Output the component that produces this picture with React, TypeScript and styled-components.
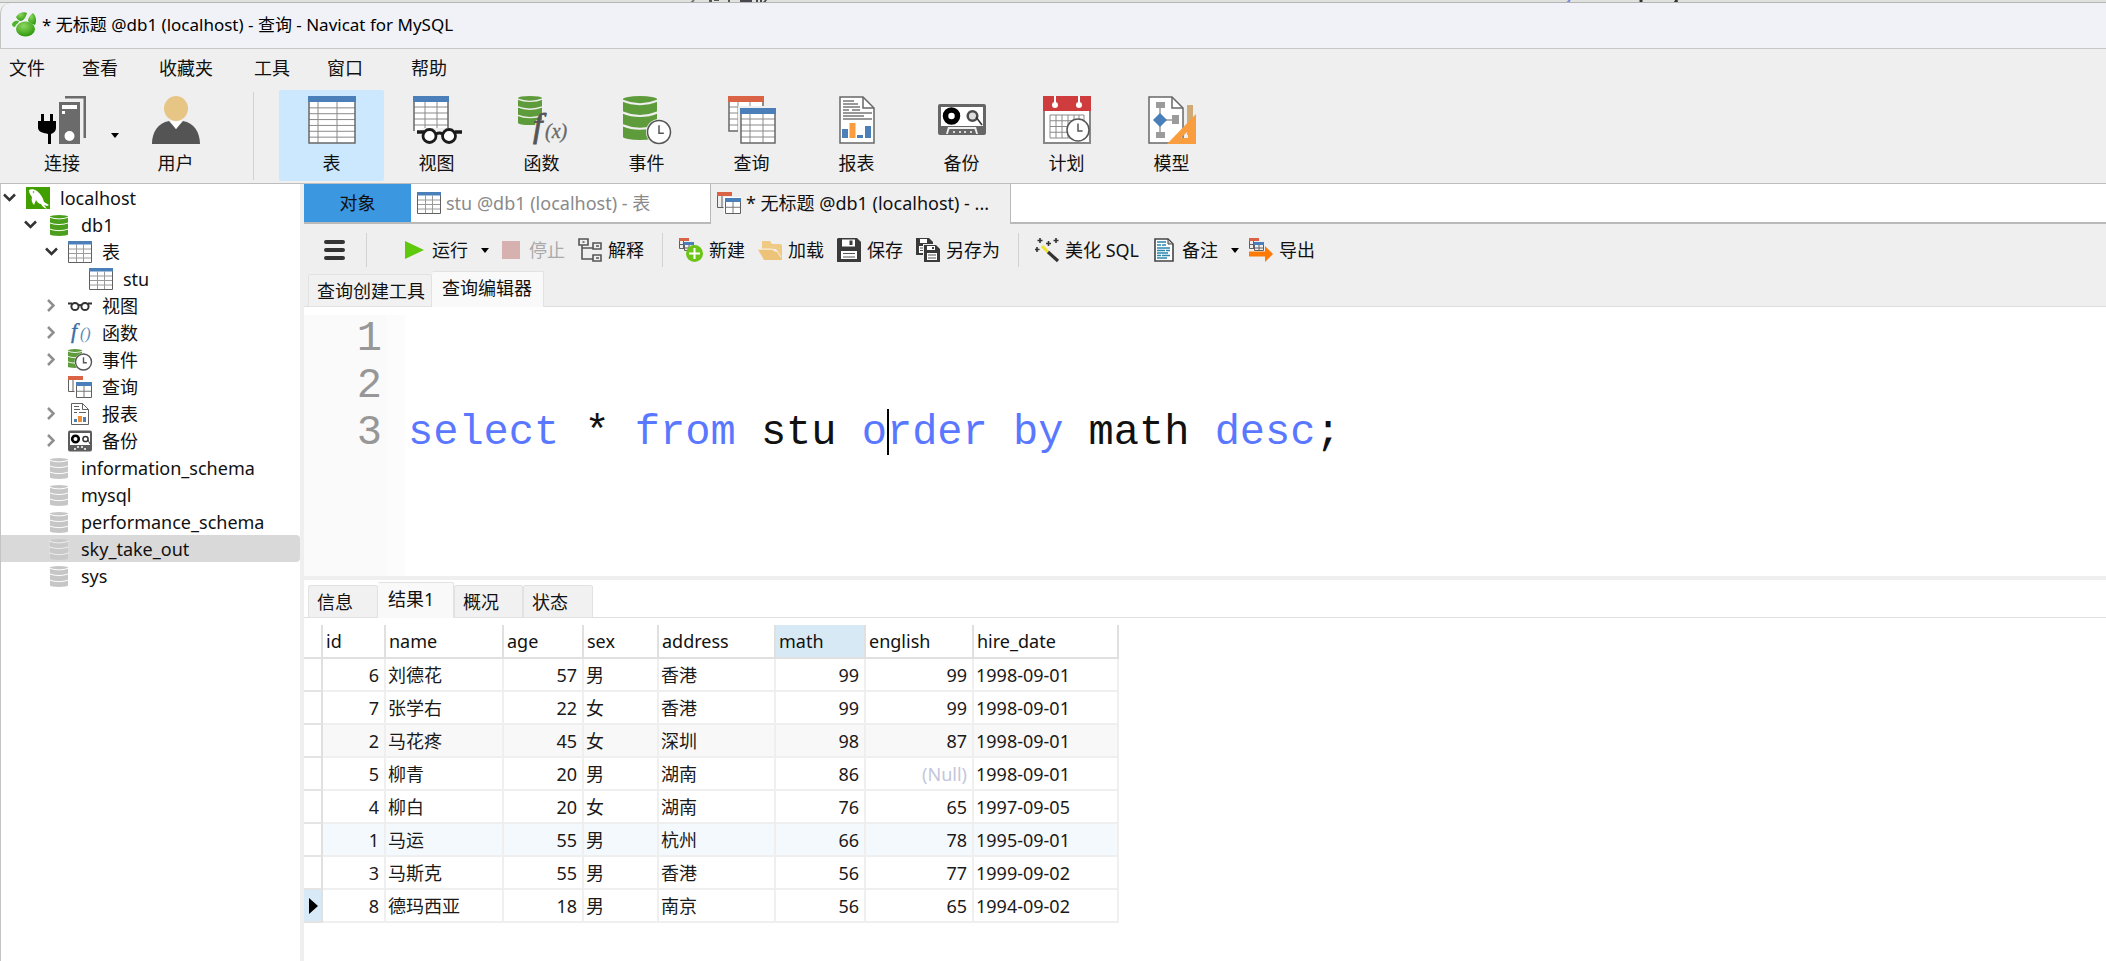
import React from "react";
import styled, { createGlobalStyle, css } from "styled-components";

const Global = createGlobalStyle`
  *, *::before, *::after { box-sizing: border-box; }
  html, body, #root { margin: 0; height: 100%; }
  body {
    background: #efefef;
    color: #111;
    font-family: "Noto Sans", "Noto Sans CJK SC", sans-serif;
    font-size: 18px;
    line-height: 24px;
  }
  button { font: inherit; color: inherit; background: none; border: 0; padding: 0; margin: 0; text-align: left; }
  ul { list-style: none; margin: 0; padding: 0; }
`;

/* ---------- window frame ---------- */

const Window = styled.div`
  display: flex;
  flex-direction: column;
  min-height: 100%;
`;

const Backdrop = styled.svg`
  display: block;
  width: 100%;
  height: 3px;
  flex: none;
  background: #e0e2e0;
  border-bottom: 1px solid #b4b6b4;
`;

const TitleBar = styled.header`
  display: flex;
  align-items: center;
  gap: 5px;
  height: 46px;
  padding: 0 0 2px 11px;
  flex: none;
  background: #f0f2f8;
  border-bottom: 1px solid #c6c7c8;
  border-left: 1px solid #c4c4c4;
  border-top-left-radius: 10px;
`;

const Title = styled.h1`
  margin: 0;
  font-size: 17px;
  font-weight: 400;
  color: #000;
`;

const MenuBar = styled.nav`
  display: flex;
  align-items: center;
  height: 38px;
  padding-left: 9px;
  flex: none;
`;

const MenuItem = styled.button<{ $gap: number }>`
  margin-right: ${(p) => p.$gap}px;
`;

const Ribbon = styled.div`
  display: flex;
  flex: none;
  height: 97px;
  padding: 3px 0 0 18px;
  border-bottom: 1px solid #bdbdbd;
`;

const RibbonButton = styled.button<{ $active?: boolean; $narrow?: boolean }>`
  display: flex;
  flex-direction: column;
  align-items: center;
  gap: 7px;
  width: ${(p) => (p.$narrow ? 88 : 105)}px;
  height: 91px;
  padding-top: 6px;
  background: ${(p) => (p.$active ? "#cce8ff" : "transparent")};
  border-radius: 2px;
`;

const RibbonArrow = styled.button`
  display: flex;
  align-items: center;
  justify-content: center;
  width: 17px;
  height: 91px;
`;

const RibbonRule = styled.div`
  width: 1px;
  height: 88px;
  margin: 2px 25px 0;
  background: #d2d2d2;
`;

/* ---------- body ---------- */

const Body = styled.div`
  display: flex;
  flex: 1;
  min-height: 0;
`;

const Sidebar = styled.aside`
  flex: 0 0 300px;
  background: #fff;
  border-left: 1px solid #c4c4c4;
`;

const Splitter = styled.div`
  flex: 0 0 4px;
  background: #efefef;
`;

const TreeRow = styled.button<{ $level: number; $selected?: boolean }>`
  display: flex;
  align-items: center;
  gap: 10px;
  width: 100%;
  height: 27px;
  padding-left: ${(p) => 1 + p.$level * 21}px;
  border-radius: 0 4px 4px 0;
  background: ${(p) => (p.$selected ? "#d9d9d9" : "transparent")};
`;

const ChevronBox = styled.span`
  display: flex;
  justify-content: center;
  width: 14px;
`;

const IconBox = styled.span`
  display: flex;
  align-items: center;
  justify-content: center;
  flex: none;
  width: 24px;
  height: 24px;
`;

const Main = styled.main`
  display: flex;
  flex-direction: column;
  flex: 1;
  min-width: 0;
`;

const DocTabs = styled.div`
  display: flex;
  flex: none;
  height: 40px;
  background: #fff;
`;

const docTabKinds = {
  home: css`
    width: 107px;
    justify-content: center;
    background: #3b97df;
    border-bottom: 2px solid #b9b9b9;
  `,
  plain: css`
    width: 300px;
    padding-left: 6px;
    color: #8a8a8a;
    border-bottom: 2px solid #b9b9b9;
    border-right: 1px solid #b9b9b9;
  `,
  current: css`
    width: 300px;
    padding: 0 8px 2px 6px;
    background: #efefef;
    border-right: 1px solid #b9b9b9;
  `,
};

const DocTab = styled.button<{ $kind: keyof typeof docTabKinds }>`
  display: flex;
  align-items: center;
  gap: 5px;
  flex: none;
  ${(p) => docTabKinds[p.$kind]}
`;

const TabText = styled.span`
  overflow: hidden;
  white-space: nowrap;
  text-overflow: ellipsis;
`;

const DocTabFill = styled.div`
  flex: 1;
  border-bottom: 2px solid #b9b9b9;
`;

const Toolbar = styled.div`
  display: flex;
  align-items: center;
  gap: 13px;
  flex: none;
  height: 47px;
  padding: 5px 0 0 18px;
`;

const ToolButton = styled.button`
  display: flex;
  align-items: center;
  gap: 6px;
  white-space: nowrap;
  &:disabled { color: #a9a9a9; }
`;

const ToolArrow = styled.button`
  display: flex;
  justify-content: center;
  width: 8px;
  margin-right: -3px;
`;

const ToolRule = styled.div<{ $before: number; $after: number }>`
  width: 1px;
  height: 34px;
  background: #d2d2d2;
  margin: 0 ${(p) => p.$after}px 0 ${(p) => p.$before}px;
`;

const SubTabs = styled.div<{ $light?: boolean }>`
  display: flex;
  align-items: flex-end;
  flex: none;
  height: ${(p) => (p.$light ? 38 : 36)}px;
  padding-left: 4px;
  background: ${(p) => (p.$light ? "#fff" : "transparent")};
  box-shadow: inset 0 -1px 0 #dfdfdf;
`;

const SubTab = styled.button<{ $active?: boolean; $width: number }>`
  width: ${(p) => p.$width}px;
  height: ${(p) => (p.$active ? 36 : 33)}px;
  padding: 0 0 ${(p) => (p.$active ? 3 : 0)}px ${(p) => (p.$active ? 10 : 8)}px;
  background: ${(p) => (p.$active ? "#f9f9f9" : "#f1f1f1")};
  border: 1px solid #e2e2e2;
  border-width: 1px 1px ${(p) => (p.$active ? 0 : 1)}px ${(p) => (p.$active ? 0 : 1)}px;
  border-radius: 2px 2px 0 0;
  white-space: nowrap;
`;

/* ---------- editor ---------- */

const Editor = styled.section`
  display: flex;
  flex: none;
  min-height: 269px;
  padding-top: 8px;
  background: #fff;
  font-family: "Liberation Mono", "Noto Sans CJK SC", monospace;
  font-size: 42px;
  line-height: 47px;
`;

const Gutter = styled.ol`
  list-style: none;
  margin: 0;
  width: 83px;
  padding: 1px 5px 0 0;
  text-align: right;
  color: #979797;
  background: #fafafa;
`;

const FoldStrip = styled.div`
  width: 18px;
  background: #fcfcfc;
`;

const Code = styled.pre`
  flex: 1;
  margin: 0;
  padding: 1px 0 0 3px;
  font: inherit;
  color: #111;
`;

const Keyword = styled.span`
  color: #5a78ff;
`;

const CaretAnchor = styled.span`
  position: relative;
`;

const Caret = styled.span`
  position: absolute;
  left: 0;
  top: 0;
  width: 2px;
  height: 46px;
  background: #000;
`;

/* ---------- results ---------- */

const Results = styled.section`
  display: flex;
  flex-direction: column;
  flex: 1;
  background: #fff;
`;

const Grid = styled.table`
  width: 815px;
  margin-top: 7px;
  table-layout: fixed;
  border-collapse: separate;
  border-spacing: 0;
`;

const HeadCell = styled.th<{ $active?: boolean }>`
  height: 34px;
  padding: 0 0 0 3px;
  font-weight: 400;
  text-align: left;
  border-right: 2px solid #e0e0e0;
  border-bottom: 2px solid #e0e0e0;
  background: ${(p) => (p.$active ? "#d8e9f6" : "#fff")};
`;

const Row = styled.tr<{ $tint?: string }>`
  background: ${(p) => p.$tint ?? "#fff"};
`;

const Cell = styled.td<{ $numeric?: boolean; $empty?: boolean }>`
  height: 33px;
  padding: 0 5px 0 2px;
  text-align: ${(p) => (p.$numeric ? "right" : "left")};
  color: ${(p) => (p.$empty ? "#c3c6dc" : "#1a1a1a")};
  border-right: 2px solid #efefef;
  border-bottom: 2px solid #efefef;
  white-space: nowrap;
`;

const MarkCell = styled.td<{ $current?: boolean }>`
  height: 33px;
  padding: 0 0 0 5px;
  background: ${(p) => (p.$current ? "#d8e9f8" : "#fff")};
  border-right: 2px solid #e0e0e0;
  border-bottom: 2px solid #e4e4e4;
  svg { display: block; }
`;

/* ---------- icons ---------- */

const DownArrow = () => (
  <svg width="8" height="5" viewBox="0 0 8 5"><path d="M0 0h8L4 5z" fill="#000" /></svg>
);

const NavicatLogo = () => (
  <svg width="25" height="25" viewBox="0 0 25 25">
    <defs>
      <radialGradient id="leaf" cx="0.4" cy="0.3" r="0.7">
        <stop offset="0" stopColor="#8ed760" /><stop offset="1" stopColor="#2f9a0c" />
      </radialGradient>
    </defs>
    <ellipse cx="13.500" cy="17" rx="9.500" ry="7.500" fill="url(#leaf)" />
    <path d="M4 5c2-4 8-6 11-4-1 4-3 7-6 8-2 0-4-2-5-4z" fill="url(#leaf)" />
    <path d="M16 9c0-3 2-6 5-8 3 3 4 8 2 12-2-1-5-2-7-4z" fill="url(#leaf)" />
    <path d="M0 12c1-2 3-4 7-3 0 2-3 3-4 6-2 0-3-1-3-3z" fill="#4fb32a" />
  </svg>
);

const Chevron = ({ open }: { open: boolean }) =>
  open ? (
    <svg width="13" height="9" viewBox="0 0 13 9"><path d="M1 1.500l5.500 5.500L12 1.500" fill="none" stroke="#333" strokeWidth="2.500" /></svg>
  ) : (
    <svg width="8" height="13" viewBox="0 0 8 13"><path d="M1 1l5.500 5.500L1 12" fill="none" stroke="#8e8e8e" strokeWidth="2.500" /></svg>
  );

const Lines = ({ x, y, w, h, rows, cols, stroke = "#8a8a8a" }: { x: number; y: number; w: number; h: number; rows: number; cols: number[]; stroke?: string }) => (
  <>
    <rect x={x} y={y} width={w} height={h} fill="#fff" />
    {Array.from({ length: rows - 1 }, (_, i) => (
      <path key={i} d={`M${x} ${y + (h / rows) * (i + 1)}h${w}`} stroke={stroke} />
    ))}
    {cols.map((c) => <path key={c} d={`M${x + c} ${y}v${h}`} stroke={stroke} />)}
  </>
);

const Disk = ({ x, y, w, h, fill, gap = "#efefef" }: { x: number; y: number; w: number; h: number; fill: string; gap?: string }) => {
  const ry = h / 14;
  const seam = (k: number) => `M${x - 1} ${y + h * k}q${w / 2 + 1} ${ry * 2.4} ${w + 2} 0`;
  return (
    <g>
      <path d={`M${x} ${y + ry}a${w / 2} ${ry} 0 0 1 ${w} 0v${h - ry * 2}a${w / 2} ${ry} 0 0 1 ${-w} 0z`} fill={fill} />
      {[0.1, 0.37, 0.66].map((k) => <path key={k} d={seam(k)} fill="none" stroke={gap} strokeWidth={h / 22} />)}
    </g>
  );
};

const ClockFace = ({ cx, cy, r, sw }: { cx: number; cy: number; r: number; sw: number }) => (
  <g fill="none" stroke="#555" strokeWidth={sw}>
    <circle cx={cx} cy={cy} r={r} fill="#fff" />
    <path d={`M${cx} ${cy - r * 0.58}V${cy + r * 0.1}h${r * 0.42}`} />
  </g>
);

const Big = ({ children }: { children: React.ReactNode }) => (
  <svg width="48" height="48" viewBox="0 0 48 48" overflow="visible">{children}</svg>
);
const Small = ({ children }: { children: React.ReactNode }) => (
  <svg width="24" height="24" viewBox="0 0 24 24" overflow="visible">{children}</svg>
);

const ConnectIcon = () => (
  <Big>
    <path d="M27 0h21v42h-2.500V2.500H27z" fill="#6b6b6b" />
    <path d="M21 6h21v42H21z" fill="#6b6b6b" />
    <path d="M24 9h15v4H24zM24 15h3v3h-3z" fill="#fff" />
    <circle cx="31.500" cy="40" r="5" fill="#fff" />
    <path d="M3 18h3v7h6v-7h3v7h3v7c0 3-2 5-5 6v10h-3V38c-4-1-10-2-10-6v-7h3z" fill="#000" />
  </Big>
);
const UserIcon = () => (
  <Big>
    <ellipse cx="24" cy="12.500" rx="12" ry="12.500" fill="#e6c585" />
    <path d="M0 48c0-12 6-21 17-23l7 8 7-8c11 2 17 11 17 23z" fill="#545454" />
    <path d="M18 24.500q6 2 12 0l-6 8.500z" fill="#fff" />
  </Big>
);
const TableIcon = () => (
  <Big>
    <Lines x={1} y={6} w={46} h={41} rows={7} cols={[9, 28]} />
    <path d="M1 1h46v46H1z" fill="none" stroke="#686868" strokeWidth="1.500" />
    <path d="M0 0h48v6H0z" fill="#4a7fba" />
  </Big>
);
const ViewIcon = () => (
  <Big>
    <Lines x={1} y={5} w={34} h={30} rows={5} cols={[11, 23]} />
    <path d="M1 35V1h34v32" fill="none" stroke="#686868" strokeWidth="1.500" />
    <path d="M0 0h36v6H0z" fill="#4a7fba" />
    <path d="M3 48V35h4l3-3h26l4 3h5v13z" fill="#efefef" />
    <g fill="none" stroke="#1b1b1b" strokeWidth="2.800">
      <circle cx="16.500" cy="40" r="6.500" fill="#fff" /><circle cx="36" cy="40" r="6.500" fill="#fff" />
      <path d="M23 38q3.500-2 6.500 0" /><path d="M4 36h7M49 36h-7" strokeWidth="3.500" />
    </g>
  </Big>
);
const Fx = styled.text`
  font-family: "Liberation Serif", serif;
  font-style: italic;
`;
const FunctionIcon = () => (
  <Big>
    <Disk x={0} y={0} w={24} h={29} fill="#5e9b3b" />
    <path d="M18 24h7v6h-8z" fill="#efefef" />
    <Fx x="15" y="41" fontSize="34" fill="#555" stroke="#555" strokeWidth="0.800">f</Fx>
    <Fx x="27" y="42" fontSize="20" fill="#666" stroke="#666" strokeWidth="0.300">(x)</Fx>
  </Big>
);
const EventIcon = () => (
  <Big>
    <Disk x={0} y={0} w={34} h={44} fill="#5e9b3b" />
    <circle cx="36" cy="36" r="13" fill="#efefef" />
    <ClockFace cx={36} cy={36} r={11.5} sw={1.5} />
  </Big>
);
const QueryIcon = () => (
  <Big>
    <Lines x={1} y={5} w={34} h={30} rows={5} cols={[9, 21]} />
    <path d="M1 1h34v34H1z" fill="none" stroke="#686868" strokeWidth="1.500" />
    <path d="M0 0h36v6H0z" fill="#d96344" />
    <path d="M10 10h38v38H10z" fill="#efefef" />
    <Lines x={13} y={17} w={34} h={30} rows={5} cols={[9, 22]} />
    <path d="M13 13h34v34H13z" fill="none" stroke="#686868" strokeWidth="1.500" />
    <path d="M12 12h36v6H12z" fill="#4a7fba" />
  </Big>
);
const ReportIcon = () => (
  <Big>
    <path d="M7 1h23l11 11v35H7z" fill="#fff" stroke="#686868" strokeWidth="1.500" />
    <path d="M30 1v11h11" fill="none" stroke="#686868" strokeWidth="1.500" />
    <path d="M10 5h11M10 8h15M10 11h17M10 14h6m3 0h8M10 17h29M10 20h21M10 23h29" stroke="#777" strokeWidth="1.300" />
    <path d="M9 33h6v9H9zM24 39h6v3h-6zM32 30h6v12h-6z" fill="#4a7fba" />
    <path d="M16.500 27h6v15h-6z" fill="#f99d3f" />
  </Big>
);
const BackupIcon = () => (
  <Big>
    <rect x="0" y="8" width="48" height="31" rx="2" fill="#666" />
    <path d="M3 11h42v19H3z" fill="#fff" />
    <path d="M8 38l2-7h28l2 7z" fill="#efefef" /><path d="M9.500 39l2-6h25l2 6z" fill="#666" />
    <circle cx="13.500" cy="20" r="6" fill="#fff" stroke="#000" strokeWidth="5.500" />
    <circle cx="34.500" cy="20" r="4.800" fill="#ddd" stroke="#4b4b4b" strokeWidth="2.500" />
    <path d="M38 21l6 8" stroke="#333" strokeWidth="1.500" />
    <path d="M15 36h2m4 0h2m3 0h2m4 0h2" stroke="#fff" strokeWidth="1.500" />
  </Big>
);
const ScheduleIcon = () => (
  <Big>
    <path d="M1 1h46v46H1z" fill="#fff" stroke="#888" strokeWidth="2" />
    <path d="M0 0h48v15H0z" fill="#cf3c3e" />
    <path d="M12 0v9M36 0v9" stroke="#fff" strokeWidth="2" />
    <circle cx="12" cy="9" r="3" fill="#fff" /><circle cx="36" cy="9" r="3" fill="#fff" />
    <Lines x={7} y={19} w={34} h={23} rows={4} cols={[6, 12, 18, 24, 29]} />
    <path d="M7 19h34v23H7z" fill="none" stroke="#8a8a8a" />
    <ClockFace cx={35} cy={34} r={11} sw={1.5} />
  </Big>
);
const ModelIcon = () => (
  <Big>
    <path d="M1 1h23l11 11v35H1z" fill="#fff" stroke="#686868" strokeWidth="1.500" />
    <path d="M24 1v11h11" fill="none" stroke="#686868" strokeWidth="1.500" />
    <path d="M12 10v28M12 24h16" stroke="#9b9b9b" strokeWidth="1.500" />
    <path d="M8 6h9v6H8zM8 36h9v6H8zM24 19h7v9h-7z" fill="#9b9b9b" />
    <path d="M12 17l7 7-7 7-7-7z" fill="#4a7fba" />
    <path d="M39 9h6v30h-6z" fill="#cfab78" />
    <path d="M48 18v30H19zM40 35v7h-7z" fill="#f99d3f" fillRule="evenodd" />
  </Big>
);

const ServerIcon = () => (
  <Small>
    <path d="M0 1h24v22H0z" fill="#41a000" />
    <path d="M3 4c2-1 5-1 8 1 4 3 6 7 7 11l5 3-2 1-3-1 3 4c-3-1-5-3-6-5-2 0-4-2-5-4l-2 5c-2-2-3-5-2-8C4 9 3 6 3 4z" fill="#fff" />
    <circle cx="7.500" cy="6" r="0.800" fill="#41a000" />
  </Small>
);
const DbIcon = ({ on, selected }: { on?: boolean; selected?: boolean }) => (
  <Small><Disk x={3} y={2} w={18} h={21} fill={on ? "#4c9f1d" : selected ? "#c9c9c9" : "#c6c6c6"} gap={selected ? "#eee" : "#fff"} /></Small>
);
const SmallTable = () => (
  <Small>
    <Lines x={0.5} y={4.5} w={23} h={18} rows={4} cols={[8, 15]} stroke="#9a9a9a" />
    <path d="M.5 1v21.500h23V1" fill="none" stroke="#606060" />
    <path d="M0 1h24v3.500H0z" fill="#4a7fba" />
  </Small>
);
const SmallView = () => (
  <Small>
    <g fill="none" stroke="#333" strokeWidth="2">
      <circle cx="7" cy="12.500" r="3.600" /><circle cx="17" cy="12.500" r="3.600" />
      <path d="M10.500 11.500q1.500-1 3 0M0 9.500h4M24 9.500h-4" />
    </g>
  </Small>
);
const SmallFunction = () => (
  <Small>
    <Fx x="3" y="17" fontSize="22" fill="#3a6ea5" stroke="#3a6ea5" strokeWidth="0.400">f</Fx>
    <Fx x="12" y="18" fontSize="16" fill="#5a8abb">()</Fx>
  </Small>
);
const SmallEvent = () => (
  <Small>
    <Disk x={0} y={1} w={14} h={19} fill="#5e9b3b" gap="#fff" />
    <circle cx="15.500" cy="14" r="9" fill="#fff" />
    <ClockFace cx={15.5} cy={14} r={8} sw={1.4} />
  </Small>
);
const SmallQuery = () => (
  <Small>
    <path d="M.5 4v12.500h6M5 4v12" fill="none" stroke="#606060" />
    <path d="M0 1h15v4H0z" fill="#d96344" />
    <path d="M7 6h17v17H7z" fill="#fff" />
    <Lines x={8.5} y={10} w={15} h={12.5} rows={2} cols={[7.5]} stroke="#777" />
    <path d="M8.500 8v14.500h15V8" fill="none" stroke="#606060" />
    <path d="M8 7h16v4H8z" fill="#4a7fba" />
  </Small>
);
const SmallReport = () => (
  <Small>
    <path d="M3.500 1.500h11l6 6v15h-17z" fill="#fff" stroke="#606060" />
    <path d="M14.500 1.500v6h6M6 4.500h5M6 7.500h6M6 10.500h3m2 0h7" fill="none" stroke="#606060" />
    <path d="M6 17h3v3H6zM15 15h3v5h-3z" fill="#4a7fba" /><path d="M10 14h4v6h-4z" fill="#ef8e36" />
  </Small>
);
const SmallBackup = () => (
  <Small>
    <rect x="0" y="1.500" width="24" height="21" rx="2" fill="#5c5c5c" />
    <path d="M2 4h20v12H2z" fill="#fff" />
    <circle cx="7.500" cy="10" r="3.300" fill="#fff" stroke="#000" strokeWidth="2.600" />
    <circle cx="17.500" cy="10" r="2.600" fill="#fff" stroke="#333" strokeWidth="1.500" />
    <path d="M20 11l2 4" stroke="#333" />
    <path d="M6 20h2m1-2h2m2 0h2m1 2h2" stroke="#fff" strokeWidth="1.500" />
  </Small>
);

const MenuLines = () => (
  <svg width="21" height="20" viewBox="0 0 21 20"><path d="M2 2h17M2 10h17M2 18h17" stroke="#333" strokeWidth="4" strokeLinecap="round" /></svg>
);
const RunIcon = () => <Small><path d="M3 3l19 9-19 9z" fill="#5fca0c" /></Small>;
const StopIcon = () => <Small><path d="M3 3h18v18H3z" fill="#d7b0b0" /></Small>;
const ExplainIcon = () => (
  <Small>
    <g fill="none" stroke="#555" strokeWidth="1.600">
      <path d="M1 1h9v6H1zM15 5h8v6h-8zM15 17h8v6h-8zM4 7v14h11M4 10h11" />
      <path d="M4.500 4h2M18 8h3M18 20h3" />
    </g>
  </Small>
);
const MiniTables = () => (
  <g>
    <path d="M.5 3v7.500h4M.5 6.500h4M4.500 3v8" fill="none" stroke="#606060" />
    <path d="M0 0h10v3H0z" fill="#d96344" />
    <path d="M5.500 7v5.500h9V7M5.500 10h9M10 7v5" fill="none" stroke="#606060" />
    <path d="M5 4h10v3H5z" fill="#4a7fba" />
  </g>
);
const NewIcon = () => (
  <Small>
    <MiniTables />
    <circle cx="15.500" cy="15.500" r="8.500" fill="#6cc516" />
    <path d="M15.500 10v11M10 15.500h11" stroke="#fff" strokeWidth="2" />
  </Small>
);
const LoadIcon = () => (
  <Small>
    <path d="M4 3h8l2 3h8q2 0 2 2v14L18 11H4z" fill="#efca84" />
    <path d="M0 11.500h14l3 2h2l5 8.500H6z" fill="#ecc379" />
    <path d="M0 11h14l3 2h2l4 6" fill="none" stroke="#f7eedc" />
  </Small>
);
const SaveIcon = () => (
  <Small>
    <path d="M1 0h19l4 4v20H0V1z" fill="#3a3a3a" />
    <path d="M5 1.500h13v7H5z" fill="#fff" /><path d="M12.500 2.500h3v4.500h-3z" fill="#3a3a3a" />
    <path d="M4 13h16v8H4z" fill="#fff" /><path d="M6 15.500h12M6 19h12" stroke="#555" strokeWidth="1.200" />
  </Small>
);
const SaveAsIcon = () => (
  <Small>
    <path d="M0 0h13l4 4v13H0z" fill="#3a3a3a" />
    <path d="M4 1h7v4H4zM3 8h6v7H3z" fill="#fff" /><path d="M4 10h4M4 12.500h4" stroke="#555" />
    <path d="M7 6h13l4 4v14H7z" fill="#efefef" />
    <path d="M8 7h12l4 4v13H8z" fill="#3a3a3a" />
    <path d="M11 8h8v4h-8zM11 15h10v7H11z" fill="#fff" /><path d="M16 9h2v2h-2z" fill="#3a3a3a" /><path d="M12 17h8M12 20h8" stroke="#555" />
  </Small>
);
const WandIcon = () => (
  <Small>
    <path d="M7 8l6 6" stroke="#f2e12b" strokeWidth="3" /><path d="M13 14l10 9" stroke="#333" strokeWidth="3.200" />
    <path d="M5 0v5M2.500 2.500h5M21 0v5M18.500 2.500h5M13.500 3v5M11 5.500h5M2 9v5M0 11.500h4.500" stroke="#333" strokeWidth="1.600" />
  </Small>
);
const NoteIcon = () => (
  <Small>
    <path d="M3 1h13l5 5v17H3z" fill="#fff" stroke="#444" strokeWidth="1.600" />
    <path d="M16 1v5h5z" fill="#ccc" stroke="#444" />
    <path d="M5 4h9M5 7h4m1 0h4M5 10h13M5 12.500h8m1 0h4M5 15h11M5 17.500h4m1 0h8M5 20h10" stroke="#2b86ad" strokeWidth="1.500" />
  </Small>
);
const ExportIcon = () => (
  <Small>
    <MiniTables />
    <path d="M0 13.500h16V8l8 8-8 8v-5.500H0z" fill="#ff7a05" />
  </Small>
);

/* ---------- data ---------- */

const menus = [
  { label: "文件", gap: 37 },
  { label: "查看", gap: 41 },
  { label: "收藏夹", gap: 41 },
  { label: "工具", gap: 37 },
  { label: "窗口", gap: 48 },
  { label: "帮助", gap: 0 },
];

const ribbon = [
  { label: "表", icon: <TableIcon /> },
  { label: "视图", icon: <ViewIcon /> },
  { label: "函数", icon: <FunctionIcon /> },
  { label: "事件", icon: <EventIcon /> },
  { label: "查询", icon: <QueryIcon /> },
  { label: "报表", icon: <ReportIcon /> },
  { label: "备份", icon: <BackupIcon /> },
  { label: "计划", icon: <ScheduleIcon /> },
  { label: "模型", icon: <ModelIcon /> },
];

type Node = { label: string; level: number; icon: React.ReactNode; open?: boolean; selected?: boolean };
const tree: Node[] = [
  { label: "localhost", level: 0, icon: <ServerIcon />, open: true },
  { label: "db1", level: 1, icon: <DbIcon on />, open: true },
  { label: "表", level: 2, icon: <SmallTable />, open: true },
  { label: "stu", level: 3, icon: <SmallTable /> },
  { label: "视图", level: 2, icon: <SmallView />, open: false },
  { label: "函数", level: 2, icon: <SmallFunction />, open: false },
  { label: "事件", level: 2, icon: <SmallEvent />, open: false },
  { label: "查询", level: 2, icon: <SmallQuery /> },
  { label: "报表", level: 2, icon: <SmallReport />, open: false },
  { label: "备份", level: 2, icon: <SmallBackup />, open: false },
  { label: "information_schema", level: 1, icon: <DbIcon /> },
  { label: "mysql", level: 1, icon: <DbIcon /> },
  { label: "performance_schema", level: 1, icon: <DbIcon /> },
  { label: "sky_take_out", level: 1, icon: <DbIcon selected />, selected: true },
  { label: "sys", level: 1, icon: <DbIcon /> },
];

const columns = [
  { name: "id", width: 63, numeric: true },
  { name: "name", width: 118 },
  { name: "age", width: 80, numeric: true },
  { name: "sex", width: 75 },
  { name: "address", width: 117 },
  { name: "math", width: 90, numeric: true },
  { name: "english", width: 108, numeric: true },
  { name: "hire_date", width: 145 },
];

const rows: (string | number | null)[][] = [
  [6, "刘德花", 57, "男", "香港", 99, 99, "1998-09-01"],
  [7, "张学右", 22, "女", "香港", 99, 99, "1998-09-01"],
  [2, "马花疼", 45, "女", "深圳", 98, 87, "1998-09-01"],
  [5, "柳青", 20, "男", "湖南", 86, null, "1998-09-01"],
  [4, "柳白", 20, "女", "湖南", 76, 65, "1997-09-05"],
  [1, "马运", 55, "男", "杭州", 66, 78, "1995-09-01"],
  [3, "马斯克", 55, "男", "香港", 56, 77, "1999-09-02"],
  [8, "德玛西亚", 18, "男", "南京", 56, 65, "1994-09-02"],
];
const tints: Record<number, string> = { 2: "#f8f8f8", 5: "#f4f9fd" };
const currentRow = 7;

const Tool = ({ icon, label, disabled }: { icon: React.ReactNode; label: string; disabled?: boolean }) => (
  <ToolButton disabled={disabled}><IconBox>{icon}</IconBox>{label}</ToolButton>
);

export default function App() {
  return (
    <Window>
      <Global />
      <Backdrop>
        <path d="M694 0l-3 3" stroke="#777" strokeWidth="2" />
        <path d="M709 0h3v2h16V0h2v3h-21zM714 0h5v1h-5z" fill="#555" />
        <path d="M740 0h12v3h-12zM756 0h2v3h-2zM760 0h2v3h-2zM765 0h2l-2 3h-3z" fill="#4a4650" />
        <path d="M1570 0l-3 3" stroke="#7a86e0" strokeWidth="2" />
        <path d="M1641 0v3M1677 0l-2 3" stroke="#333" strokeWidth="3" />
      </Backdrop>
      <TitleBar>
        <NavicatLogo />
        <Title>* 无标题 @db1 (localhost) - 查询 - Navicat for MySQL</Title>
      </TitleBar>
      <MenuBar>
        {menus.map((m) => <MenuItem key={m.label} $gap={m.gap}>{m.label}</MenuItem>)}
      </MenuBar>
      <Ribbon>
        <RibbonButton $narrow><ConnectIcon />连接</RibbonButton>
        <RibbonArrow aria-label="连接"><DownArrow /></RibbonArrow>
        <RibbonButton><UserIcon />用户</RibbonButton>
        <RibbonRule />
        {ribbon.map((r, i) => (
          <RibbonButton key={r.label} $active={i === 0}>{r.icon}{r.label}</RibbonButton>
        ))}
      </Ribbon>
      <Body>
        <Sidebar>
          <ul>
            {tree.map((n) => (
              <li key={n.label}>
                <TreeRow $level={n.level} $selected={n.selected}>
                  <ChevronBox>{n.open !== undefined && <Chevron open={n.open} />}</ChevronBox>
                  <IconBox>{n.icon}</IconBox>
                  {n.label}
                </TreeRow>
              </li>
            ))}
          </ul>
        </Sidebar>
        <Splitter />
        <Main>
          <DocTabs>
            <DocTab $kind="home">对象</DocTab>
            <DocTab $kind="plain"><IconBox><SmallTable /></IconBox><TabText>stu @db1 (localhost) - 表</TabText></DocTab>
            <DocTab $kind="current"><IconBox><SmallQuery /></IconBox><TabText>* 无标题 @db1 (localhost) - ...</TabText></DocTab>
            <DocTabFill />
          </DocTabs>
          <Toolbar>
            <ToolButton aria-label="菜单"><IconBox><MenuLines /></IconBox></ToolButton>
            <ToolRule $before={7} $after={22} />
            <Tool icon={<RunIcon />} label="运行" />
            <ToolArrow aria-label="运行"><DownArrow /></ToolArrow>
            <Tool icon={<StopIcon />} label="停止" disabled />
            <Tool icon={<ExplainIcon />} label="解释" />
            <ToolRule $before={5} $after={3} />
            <Tool icon={<NewIcon />} label="新建" />
            <Tool icon={<LoadIcon />} label="加载" />
            <Tool icon={<SaveIcon />} label="保存" />
            <Tool icon={<SaveAsIcon />} label="另存为" />
            <ToolRule $before={5} $after={3} />
            <Tool icon={<WandIcon />} label="美化 SQL" />
            <Tool icon={<NoteIcon />} label="备注" />
            <ToolArrow aria-label="备注"><DownArrow /></ToolArrow>
            <Tool icon={<ExportIcon />} label="导出" />
          </Toolbar>
          <SubTabs>
            <SubTab $width={124}>查询创建工具</SubTab>
            <SubTab $width={112} $active>查询编辑器</SubTab>
          </SubTabs>
          <Editor>
            <Gutter><li>1</li><li>2</li><li>3</li></Gutter>
            <FoldStrip />
            <Code>
              {"\n\n"}
              <Keyword>select</Keyword>{" * "}<Keyword>from</Keyword>{" stu "}
              <Keyword>o</Keyword><CaretAnchor><Caret /></CaretAnchor><Keyword>rder</Keyword>
              {" "}<Keyword>by</Keyword>{" math "}<Keyword>desc</Keyword>;
            </Code>
          </Editor>
          <Splitter />
          <Results>
            <SubTabs $light>
              <SubTab $width={70}>信息</SubTab>
              <SubTab $width={76} $active>结果1</SubTab>
              <SubTab $width={69}>概况</SubTab>
              <SubTab $width={70}>状态</SubTab>
            </SubTabs>
            <Grid>
              <colgroup>
                <col width={19} />
                {columns.map((c) => <col key={c.name} width={c.width} />)}
              </colgroup>
              <thead>
                <tr>
                  <HeadCell />
                  {columns.map((c) => <HeadCell key={c.name} $active={c.name === "math"}>{c.name}</HeadCell>)}
                </tr>
              </thead>
              <tbody>
                {rows.map((r, i) => (
                  <Row key={i} $tint={tints[i]}>
                    <MarkCell $current={i === currentRow}>
                      {i === currentRow && <svg width="10" height="16" viewBox="0 0 10 16"><path d="M0 0l9 8-9 8z" fill="#000" /></svg>}
                    </MarkCell>
                    {r.map((v, j) => (
                      <Cell key={j} $numeric={columns[j].numeric} $empty={v === null}>{v === null ? "(Null)" : v}</Cell>
                    ))}
                  </Row>
                ))}
              </tbody>
            </Grid>
          </Results>
        </Main>
      </Body>
    </Window>
  );
}
